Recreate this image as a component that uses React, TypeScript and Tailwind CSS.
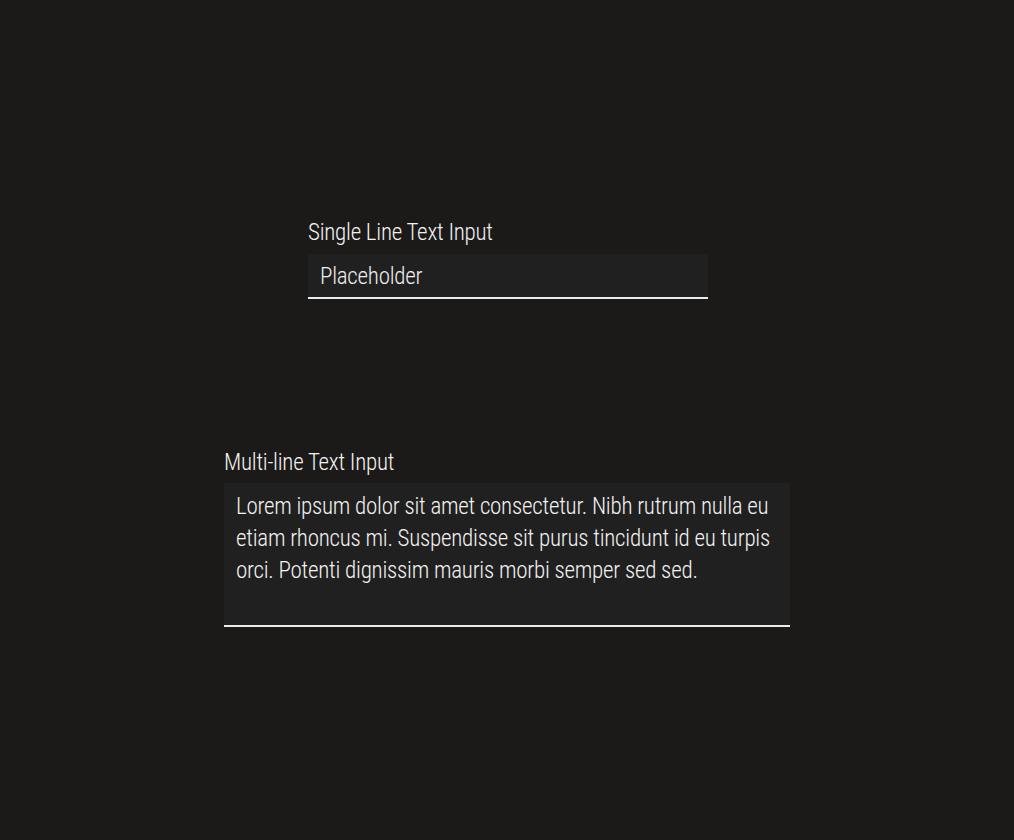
const labelCls =
  "block text-[23px] font-light leading-[27px] tracking-[-0.25px] text-[#f3f2f1]";

function SingleLineField() {
  return (
    <label className="ml-[2px] flex w-[400px] flex-col gap-[8px]">
      <span className={labelCls}>Single Line Text Input</span>
      <input
        type="text"
        placeholder="Placeholder"
        className="h-[45px] w-full border-b-2 border-[#ecebea] bg-[#212020] px-3 pt-[2px] text-[23px] font-light leading-[27px] tracking-[-0.25px] text-[#f3f2f1] outline-none placeholder:text-[#efeeed]"
      />
    </label>
  );
}

function MultiLineField() {
  return (
    <label className="flex w-[566px] flex-col gap-[7px]">
      <span className={labelCls}>Multi-line Text Input</span>
      <textarea
        defaultValue="Lorem ipsum dolor sit amet consectetur. Nibh rutrum nulla eu etiam rhoncus mi. Suspendisse sit purus tincidunt id eu turpis orci. Potenti dignissim mauris morbi semper sed sed."
        className="h-[144px] w-full resize-none overflow-hidden border-b-2 border-[#ecebea] bg-[#212020] pb-2 pl-3 pr-2 pt-2 text-[23px] font-light leading-[32px] tracking-[-0.25px] text-[#f3f2f1] outline-none"
      />
    </label>
  );
}

export default function App() {
  return (
    <div className="flex min-h-[840px] flex-col items-center gap-[150px] bg-[#1b1a19] pt-[219px] font-['Roboto_Condensed',sans-serif]">
      <SingleLineField />
      <MultiLineField />
    </div>
  );
}
